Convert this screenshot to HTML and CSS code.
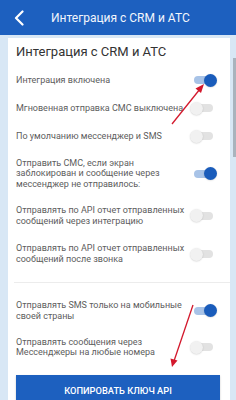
FILE: index.html
```html
<!DOCTYPE html>
<html lang="ru">
<head>
<meta charset="utf-8">
<link rel="stylesheet" href="styles.css">
</head>
<body>
<header class="appbar">
  <svg class="back" width="12" height="16" viewBox="0 0 12 16"><path d="M9.5 1.5 L3 8 L9.5 14.5" fill="none" stroke="#fff" stroke-width="2.2" stroke-linecap="round" stroke-linejoin="round"/></svg>
  <span class="appbar-title">Интеграция с CRM и АТС</span>
</header>
<main class="card">
  <h1 class="card-title">Интеграция с CRM и АТС</h1>
  <div class="row"><span class="label">Интеграция включена</span><span class="switch on"></span></div>
  <div class="row"><span class="label">Мгновенная отправка СМС выключена</span><span class="switch"></span></div>
  <div class="row"><span class="label">По умолчанию мессенджер и SMS</span><span class="switch"></span></div>
  <div class="row"><span class="label">Отправить СМС, если экран<br>заблокирован и сообщение через<br>мессенджер не отправилось:</span><span class="switch on"></span></div>
  <div class="row"><span class="label">Отправлять по API отчет отправленных<br>сообщений через интеграцию</span><span class="switch"></span></div>
  <div class="row row-loose"><span class="label">Отправлять по API отчет отправленных<br>сообщений после звонка</span><span class="switch"></span></div>
  <hr class="divider">
  <div class="row"><span class="label">Отправлять SMS только на мобильные<br>своей страны</span><span class="switch on"></span></div>
  <div class="row"><span class="label">Отправлять сообщения через<br>Мессенджеры на любые номера</span><span class="switch"></span></div>
  <button class="copy-btn">КОПИРОВАТЬ КЛЮЧ API</button>
</main>
<div class="scrollbar"></div>
<svg class="arrows" width="236" height="400" viewBox="0 0 236 400">
  <line x1="172" y1="124" x2="200" y2="89" stroke="#d3182c" stroke-width="1.3"/>
  <polygon points="204,84 195.5,88.5 201,93" fill="#d3182c"/>
  <line x1="193" y1="305" x2="174" y2="361" stroke="#d3182c" stroke-width="1.3"/>
  <polygon points="172,367 170.5,358.5 177.5,360.5" fill="#d3182c"/>
</svg>
</body>
</html>
```
FILE: styles.css
```css
* { box-sizing: border-box; }
html, body { margin: 0; padding: 0; }
body {
  width: 236px;
  height: 400px;
  overflow: hidden;
  background: #d8e7f5;
  font-family: Roboto, "Noto Sans", sans-serif;
  position: relative;
}
.appbar {
  height: 35px;
  background: #1d60bf;
  display: flex;
  align-items: center;
  padding-left: 13px;
  color: #fff;
}
.back { display: block; }
.appbar-title {
  margin-left: 26px;
  font-size: 12px;
  color: #f2f6fc;
}
.card {
  background: #fff;
  margin: 3px 6px 0 8px;
  padding: 6px 10px 10px 8px;
  min-height: 380px;
}
.card-title {
  margin: 0 0 6px;
  font-size: 13px;
  line-height: 16px;
  font-weight: 400;
  color: #333;
}
.row {
  display: flex;
  align-items: center;
  justify-content: space-between;
  padding: 7.5px 0;
}
.row-loose { padding-top: 9.5px; }
.label {
  font-size: 9px;
  line-height: 10.8px;
  color: #5d5d5d;
  white-space: nowrap;
  min-width: 0;
}
.switch {
  position: relative;
  flex: none;
  width: 27px;
  height: 13px;
  margin-right: 3px;
}
.switch::before {
  content: "";
  position: absolute;
  left: 4px; right: 4px; top: 2.5px;
  height: 8px;
  border-radius: 4px;
  background: #e2e2e2;
}
.switch::after {
  content: "";
  position: absolute;
  left: 0; top: 0;
  width: 13px; height: 13px;
  border-radius: 50%;
  background: #f1f1f1;
  box-shadow: 0 0.5px 1.5px rgba(0,0,0,0.18);
}
.switch.on::before { background: #a8c3e7; }
.switch.on::after { left: auto; right: 0; background: #1a5cbb; }
.divider {
  border: 0;
  border-top: 1px solid #ececec;
  margin: 9px -10px 10px -2px;
}
.copy-btn {
  display: block;
  width: 100%;
  height: 31px;
  margin-top: 9px;
  border: 0;
  background: #1d60bf;
  color: #fff;
  font-family: Roboto, sans-serif;
  font-size: 9.3px;
  font-weight: 500;
  box-shadow: 0 1px 2px rgba(0,0,0,0.2);
}
.scrollbar {
  position: absolute;
  left: 233px; top: 58px;
  width: 3px; height: 99px;
  background: #a9b3bd;
}
.arrows {
  position: absolute;
  left: 0; top: 0;
}
```
